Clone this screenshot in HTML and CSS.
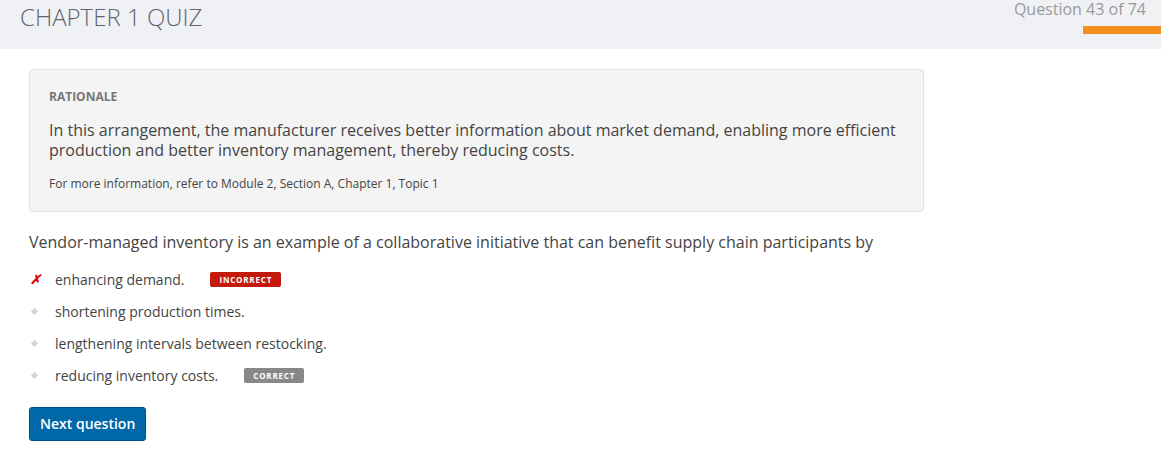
FILE: index.html
```html
<!DOCTYPE html>
<html>
<head>
<meta charset="utf-8">
<link rel="stylesheet" href="styles.css">
</head>
<body>
<header class="topbar">
  <h1 class="title">CHAPTER 1 QUIZ</h1>
  <div class="progress">
    <div class="counter">Question 43 of 74</div>
    <div class="bar"></div>
  </div>
</header>
<main class="content">
  <section class="rationale">
    <div class="label">RATIONALE</div>
    <p class="explain">In this arrangement, the manufacturer receives better information about market demand, enabling more efficient production and better inventory management, thereby reducing costs.</p>
    <p class="ref">For more information, refer to Module 2, Section A, Chapter 1, Topic 1</p>
  </section>
  <p class="question">Vendor-managed inventory is an example of a collaborative initiative that can benefit supply chain participants by</p>
  <ul class="options">
    <li class="option"><span class="mark wrong">✗</span><span class="text">enhancing demand.</span><span class="badge bad">INCORRECT</span></li>
    <li class="option"><span class="mark"><span class="dot"></span></span><span class="text">shortening production times.</span></li>
    <li class="option"><span class="mark"><span class="dot"></span></span><span class="text">lengthening intervals between restocking.</span></li>
    <li class="option"><span class="mark"><span class="dot"></span></span><span class="text">reducing inventory costs.</span><span class="badge good">CORRECT</span></li>
  </ul>
  <button class="next">Next question</button>
</main>
</body>
</html>
```
FILE: styles.css
```css
* { box-sizing: border-box; }
body {
  margin: 0;
  font-family: "Open Sans", "Liberation Sans", sans-serif;
  color: #333;
  background: #fff;
}
.topbar {
  height: 49px;
  background: #f0f1f5;
  display: flex;
  justify-content: space-between;
  align-items: flex-start;
}
.title {
  margin: 0;
  padding: 1px 0 0 20px;
  font-weight: 300;
  font-size: 24px;
  line-height: 32px;
  color: #5f6470;
}
.progress {
  display: flex;
  flex-direction: column;
  align-items: flex-end;
}
.counter {
  font-size: 16px;
  line-height: 20px;
  color: #9a9a9a;
  padding-right: 15px;
  margin-top: -1px;
}
.bar {
  width: 78px;
  height: 8px;
  background: #f5901e;
  margin-top: 7px;
}
.content {
  padding: 20px 29px;
}
.rationale {
  width: 895px;
  background: #f4f4f4;
  border: 1px solid #e2e2e2;
  border-radius: 4px;
  padding: 19px 19px 19px;
}
.label {
  font-size: 12px;
  font-weight: 700;
  color: #777;
  line-height: 16px;
}
.explain {
  margin: 15px 0 0;
  font-size: 16px;
  line-height: 20px;
  color: #444;
}
.ref {
  margin: 16px 0 0;
  font-size: 12px;
  line-height: 16px;
  color: #444;
}
.question {
  margin: 19px 0 0;
  font-size: 16px;
  line-height: 22px;
  color: #444;
}
.options {
  list-style: none;
  margin: 10px 0 0;
  padding: 0;
}
.option {
  display: flex;
  align-items: center;
  height: 32px;
  font-size: 14px;
  color: #444;
}
.mark {
  width: 26px;
  display: flex;
  align-items: center;
}
.wrong {
  color: #e8000b;
  font-size: 13px;
  font-style: italic;
  font-weight: 700;
  padding-left: 1px;
}
.dot {
  width: 5px;
  height: 5px;
  background: #d4d4d4;
  transform: rotate(45deg);
  margin-left: 3px;
}
.badge {
  margin-left: 26px;
  font-size: 8px;
  font-weight: 700;
  letter-spacing: 0.8px;
  color: #fff;
  padding: 0 9px;
  height: 15px;
  line-height: 15px;
  border-radius: 2px;
}
.bad { background: #c41a0b; }
.good { background: #888; }
.next {
  margin-top: 16px;
  font-family: inherit;
  font-size: 14px;
  font-weight: 600;
  color: #fff;
  background: #0067a8;
  border: 1px solid #00518a;
  border-radius: 3px;
  height: 34px;
  padding: 0 10px 1px;
}
```
